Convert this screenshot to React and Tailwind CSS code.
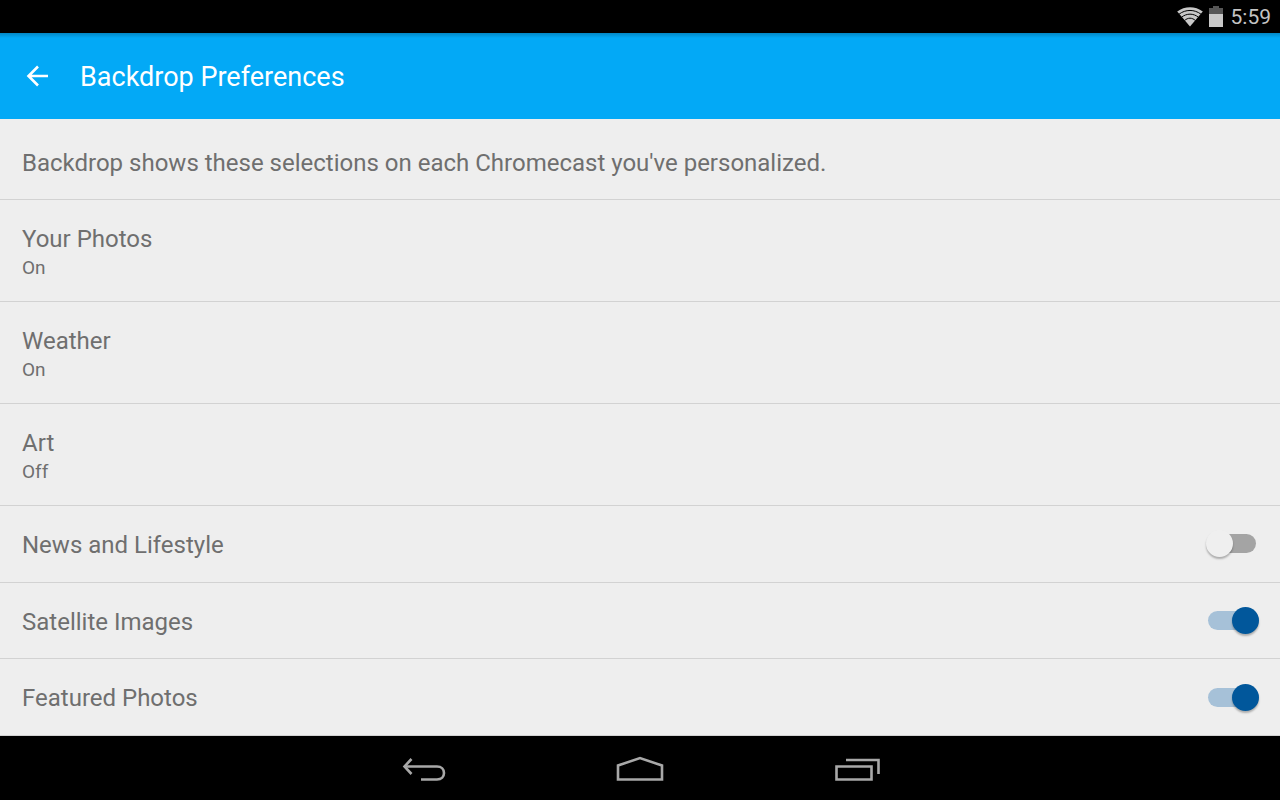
const links = [
  { title: "Your Photos", value: "On" },
  { title: "Weather", value: "On" },
  { title: "Art", value: "Off" },
];

const toggles = [
  { id: "news", title: "News and Lifestyle", on: false },
  { id: "satellite", title: "Satellite Images", on: true },
  { id: "featured", title: "Featured Photos", on: true },
];

function StatusBar() {
  return (
    <div className="flex h-[33px] shrink-0 items-center justify-end bg-black pr-[9px] text-[#c4c4c4]">
      <svg className="mr-1.5" width="26" height="20" viewBox="0 0 26 20" aria-label="Wi-Fi">
        <path d="M13 19.500L.2 4.500C7.600-1.200 18.400-1.200 25.800 4.500Z" fill="#c8c8c8" />
        <g fill="none" stroke="#000" strokeWidth="1">
          <path d="M2 7.200C8.600 2.200 17.400 2.200 24 7.200" />
          <path d="M4.500 10.300C9.500 6.100 16.500 6.100 21.500 10.300" />
          <path d="M7.500 13.600C10.800 10.400 15.200 10.400 18.500 13.600" />
        </g>
      </svg>
      <svg className="mr-2" width="14" height="21" viewBox="0 0 14 21" aria-label="Battery">
        <path d="M4 0h6v2h4v6H0V2h4z" fill="#565656" />
        <path d="M0 8h14v13H0z" fill="#c8c8c8" />
      </svg>
      <time className="text-[21px] leading-6">5:59</time>
    </div>
  );
}

function Header() {
  return (
    <header className="flex h-[86px] shrink-0 items-center bg-[#03a9f6] bg-linear-to-b from-black/20 to-transparent to-[5px] pl-[21px] text-white">
      <button type="button" aria-label="Back" className="mr-[27px] cursor-pointer">
        <svg width="32" height="32" viewBox="0 0 32 32" fill="none" stroke="currentColor" strokeWidth="2.600">
          <path d="M27 16H8M17 6.500L7.500 16L17 25.500" />
        </svg>
      </button>
      <h1 className="pt-0.5 text-[27px] leading-8">Backdrop Preferences</h1>
    </header>
  );
}

function Toggle({ id, title, on }) {
  return (
    <label
      htmlFor={id}
      className="flex flex-1 cursor-pointer items-center justify-between border-b border-[#d2d2d2] pr-[21px] pl-[22px]"
    >
      <span className="pt-0.5 text-2xl leading-8">{title}</span>
      <span className="relative flex w-[53px] items-center pr-[3px] pl-0.5">
        <input id={id} type="checkbox" role="switch" defaultChecked={on} className="peer sr-only" />
        <span className="h-[19px] flex-1 rounded-full bg-[#a4a4a4] peer-checked:bg-[#a6c1d8]" />
        <span className="absolute left-0 size-[27px] rounded-full bg-[#efefef] shadow-[0_2px_2px_rgba(0,0,0,0.28)] peer-checked:right-0 peer-checked:left-auto peer-checked:bg-[#01579b]" />
      </span>
    </label>
  );
}

function NavBar() {
  return (
    <nav className="flex h-16 shrink-0 items-center justify-center gap-[168px] bg-black text-[#a8a8a8]">
      <button type="button" aria-label="Back" className="cursor-pointer">
        <svg width="48" height="32" viewBox="0 0 48 32" fill="none" stroke="currentColor" strokeWidth="2.600">
          <path d="M5 14.500H38C42.500 14.500 45 17.500 45 21S42.500 27.500 38 27.500H22" />
          <path d="M12.500 7L5.500 14.500L12.500 22" />
        </svg>
      </button>
      <button type="button" aria-label="Home" className="cursor-pointer">
        <svg width="50" height="32" viewBox="0 0 50 32" fill="none" stroke="currentColor" strokeWidth="2.600">
          <path d="M3 27.500V13.500L25 6L47 13.500V27.500Z" />
        </svg>
      </button>
      <button type="button" aria-label="Recent apps" className="cursor-pointer">
        <svg width="48" height="32" viewBox="0 0 48 32" fill="none" stroke="currentColor" strokeWidth="2.600">
          <path d="M3.500 14.500H38.500V27.500H3.500Z" />
          <path d="M13 8H45.500V22" />
        </svg>
      </button>
    </nav>
  );
}

export default function App() {
  return (
    <div className="flex min-h-screen flex-col bg-[#eeeeee] font-['Roboto',sans-serif] text-[#6f6f6f]">
      <StatusBar />
      <Header />
      <main className="flex flex-1 flex-col">
        <p className="border-b border-[#d2d2d2] px-[22px] pt-7 pb-5 text-2xl leading-8">
          Backdrop shows these selections on each Chromecast you've personalized.
        </p>
        {links.map(({ title, value }) => (
          <a key={title} href="#" className="block border-b border-[#d2d2d2] px-[22px] pt-[23px] pb-5">
            <span className="block text-2xl leading-8">{title}</span>
            <span className="block text-[19px] leading-[26px]">{value}</span>
          </a>
        ))}
        {toggles.map((item) => (
          <Toggle key={item.id} {...item} />
        ))}
      </main>
      <NavBar />
    </div>
  );
}
